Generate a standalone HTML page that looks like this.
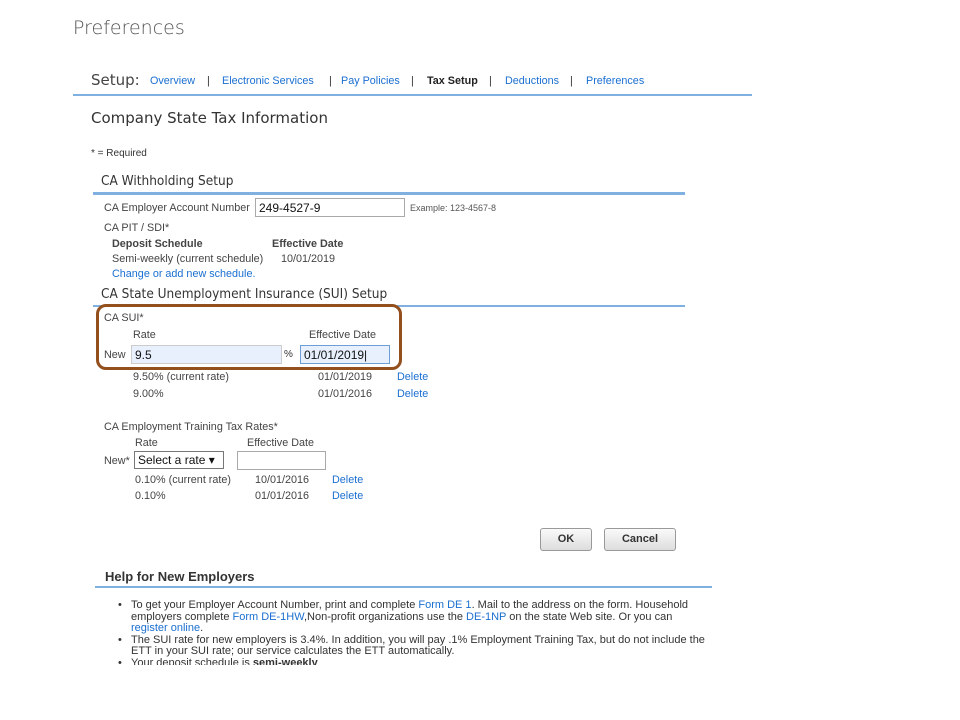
<!DOCTYPE html>
<html><head><meta charset="utf-8"><style>
body{margin:0;width:960px;height:720px;background:#fff;position:relative;overflow:hidden;font-family:"Liberation Sans",Arial,sans-serif;color:#333}
.a{position:absolute;white-space:nowrap;line-height:1}
.s11{font-size:10.8px}.s10{font-size:10px}
.lk{color:#1a6fd0}
.hd{font-size:13.5px;color:#333;font-family:"DejaVu Sans Condensed","Liberation Sans",sans-serif}
.ln{position:absolute;background:#7fb0e0}
.inp{position:absolute;border:1px solid #a9a9a9;background:#fff;box-sizing:border-box;font-size:12px;color:#111;padding:2px 3px;line-height:14px}
.btn{position:absolute;border:1px solid #999;border-radius:3px;background:linear-gradient(#fafafa,#ddd);box-sizing:border-box;font-size:11px;font-weight:bold;text-align:center;line-height:20px;color:#333}
</style></head><body>
<div class="a" style="left:73px;top:19px;font-size:19px;color:#555;font-family:'DejaVu Sans','Liberation Sans',sans-serif;font-weight:300">Preferences</div>
<div class="a" style="left:91px;top:73px;font-size:15px;color:#444;font-family:'DejaVu Sans','Liberation Sans',sans-serif">Setup:</div>
<div class="a s11 lk" style="left:150px;top:76px">Overview</div>
<div class="a s11" style="left:207px;top:76px">|</div>
<div class="a s11 lk" style="left:222px;top:76px">Electronic Services</div>
<div class="a s11" style="left:329px;top:76px">|</div>
<div class="a s11 lk" style="left:341px;top:76px">Pay Policies</div>
<div class="a s11" style="left:411px;top:76px">|</div>
<div class="a s11" style="left:427px;top:76px;font-weight:bold;color:#222">Tax Setup</div>
<div class="a s11" style="left:489px;top:76px">|</div>
<div class="a s11 lk" style="left:505px;top:76px">Deductions</div>
<div class="a s11" style="left:570px;top:76px">|</div>
<div class="a s11 lk" style="left:586px;top:76px">Preferences</div>
<div class="ln" style="left:73px;top:94px;width:679px;height:2px"></div>
<div class="a" style="left:91px;top:111px;font-size:15px;color:#333;font-family:'DejaVu Sans','Liberation Sans',sans-serif">Company State Tax Information</div>
<div class="a s10" style="left:91px;top:149px">* = Required</div>
<div class="a hd" style="left:101px;top:175px">CA Withholding Setup</div>
<div class="ln" style="left:93px;top:192px;width:592px;height:3px"></div>
<div class="a s11" style="left:104px;top:203px;color:#444">CA Employer Account Number</div>
<div class="inp" style="left:255px;top:198px;width:150px;height:19px">249-4527-9</div>
<div class="a" style="left:410px;top:204px;font-size:9px;color:#555">Example: 123-4567-8</div>
<div class="a s11" style="left:104px;top:223px;color:#444">CA PIT / SDI*</div>
<div class="a s11" style="left:112px;top:239px;font-weight:bold;color:#444">Deposit Schedule</div>
<div class="a s11" style="left:272px;top:239px;font-weight:bold;color:#444">Effective Date</div>
<div class="a s11" style="left:112px;top:254px;color:#444">Semi-weekly (current schedule)</div>
<div class="a s11" style="left:281px;top:254px;color:#444">10/01/2019</div>
<div class="a s11 lk" style="left:112px;top:269px">Change or add new schedule.</div>
<div class="a hd" style="left:101px;top:288px">CA State Unemployment Insurance (SUI) Setup</div>
<div class="ln" style="left:93px;top:305px;width:592px;height:2px"></div>
<div style="position:absolute;left:96px;top:304px;width:306px;height:66px;box-sizing:border-box;border:3px solid #93501d;border-radius:10px"></div>
<div class="a s11" style="left:104px;top:313px;color:#444">CA SUI*</div>
<div class="a s11" style="left:133px;top:330px;color:#444">Rate</div>
<div class="a s11" style="left:309px;top:330px;color:#444">Effective Date</div>
<div class="a s11" style="left:104px;top:350px;color:#444">New</div>
<div class="inp" style="left:131px;top:345px;width:151px;height:19px;background:#e8f0fe;border-color:#ccc">9.5</div>
<div class="a s10" style="left:284px;top:350px">%</div>
<div class="inp" style="left:300px;top:345px;width:90px;height:19px;background:#e8f0fe;border-color:#6d9ed6">01/01/2019|</div>
<div class="a s11" style="left:133px;top:372px;color:#444">9.50% (current rate)</div>
<div class="a s11" style="left:318px;top:372px;color:#444">01/01/2019</div>
<div class="a s11 lk" style="left:397px;top:372px">Delete</div>
<div class="a s11" style="left:133px;top:389px;color:#444">9.00%</div>
<div class="a s11" style="left:318px;top:389px;color:#444">01/01/2016</div>
<div class="a s11 lk" style="left:397px;top:389px">Delete</div>
<div class="a s11" style="left:104px;top:422px;color:#444">CA Employment Training Tax Rates*</div>
<div class="a s11" style="left:135px;top:438px;color:#444">Rate</div>
<div class="a s11" style="left:247px;top:438px;color:#444">Effective Date</div>
<div class="a s11" style="left:104px;top:456px;color:#444">New*</div>
<div class="inp" style="left:134px;top:451px;width:90px;height:18px;padding:1px 3px;border-color:#777">Select a rate ▾</div>
<div class="inp" style="left:237px;top:451px;width:89px;height:19px"></div>
<div class="a s11" style="left:135px;top:475px;color:#444">0.10% (current rate)</div>
<div class="a s11" style="left:255px;top:475px;color:#444">10/01/2016</div>
<div class="a s11 lk" style="left:332px;top:475px">Delete</div>
<div class="a s11" style="left:135px;top:491px;color:#444">0.10%</div>
<div class="a s11" style="left:255px;top:491px;color:#444">01/01/2016</div>
<div class="a s11 lk" style="left:332px;top:491px">Delete</div>
<div class="btn" style="left:540px;top:528px;width:52px;height:23px">OK</div>
<div class="btn" style="left:604px;top:528px;width:72px;height:23px">Cancel</div>
<div class="a" style="left:105px;top:570px;font-size:13px;font-weight:bold;color:#333">Help for New Employers</div>
<div class="ln" style="left:95px;top:586px;width:617px;height:2px"></div>
<div style="position:absolute;left:118px;top:600px;width:588px;font-size:11px;line-height:11.5px;color:#333">
<div style="position:relative;padding-left:13px"><span style="position:absolute;left:0">•</span>To get your Employer Account Number, print and complete <span class="lk">Form DE 1</span>. Mail to the address on the form. Household employers complete <span class="lk">Form DE-1HW</span>,Non-profit organizations use the <span class="lk">DE-1NP</span> on the state Web site. Or you can <span class="lk">register online</span>.</div>
<div style="position:relative;padding-left:13px"><span style="position:absolute;left:0">•</span>The SUI rate for new employers is 3.4%. In addition, you will pay .1% Employment Training Tax, but do not include the ETT in your SUI rate; our service calculates the ETT automatically.</div>
<div style="position:relative;padding-left:13px;height:7px;overflow:hidden"><span style="position:absolute;left:0">•</span>Your deposit schedule is <b>semi-weekly</b></div>
</div>
</body></html>
